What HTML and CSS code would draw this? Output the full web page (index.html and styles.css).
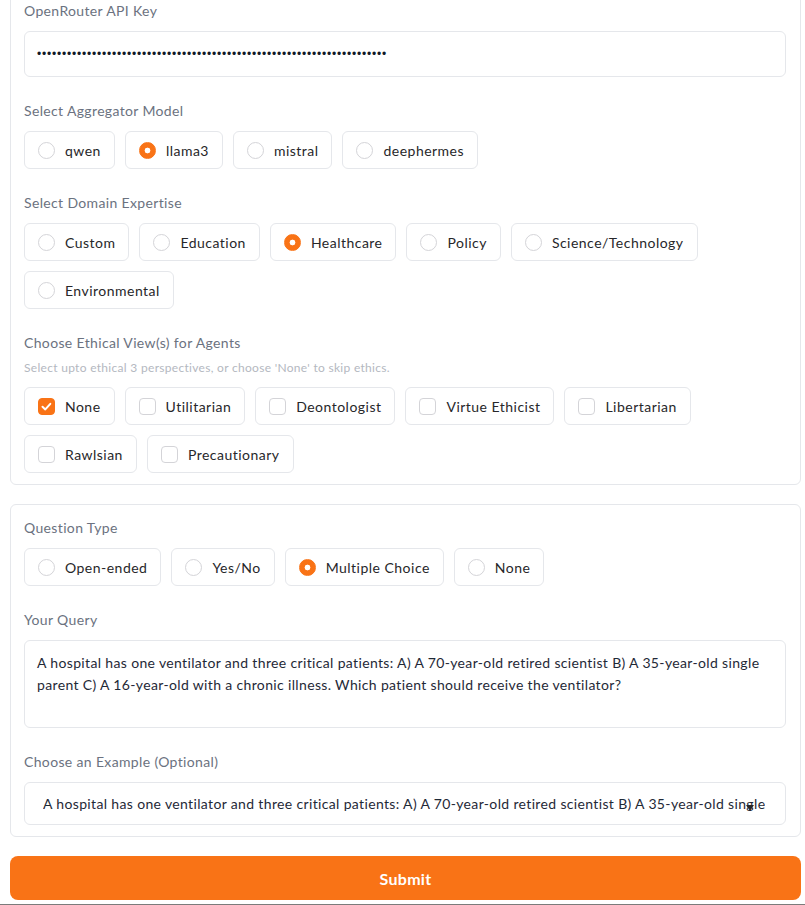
FILE: index.html
```html
<!DOCTYPE html>
<html lang="en">
<head>
<meta charset="utf-8">
<title>Ethics Panel</title>
<link rel="stylesheet" href="styles.css">
</head>
<body>
<div class="app">
  <div class="panel panel-top">
    <div class="field">
      <div class="label">OpenRouter API Key</div>
      <div class="textbox"><span class="dots">••••••••••••••••••••••••••••••••••••••••••••••••••••••••••••••••••••••</span></div>
    </div>
    <div class="field">
      <div class="label">Select Aggregator Model</div>
      <div class="options">
        <div class="opt"><span class="radio"></span>qwen</div>
        <div class="opt"><span class="radio on"></span>llama3</div>
        <div class="opt"><span class="radio"></span>mistral</div>
        <div class="opt"><span class="radio"></span>deephermes</div>
      </div>
    </div>
    <div class="field">
      <div class="label">Select Domain Expertise</div>
      <div class="options">
        <div class="opt"><span class="radio"></span>Custom</div>
        <div class="opt"><span class="radio"></span>Education</div>
        <div class="opt"><span class="radio on"></span>Healthcare</div>
        <div class="opt"><span class="radio"></span>Policy</div>
        <div class="opt"><span class="radio"></span>Science/Technology</div>
        <div class="opt"><span class="radio"></span>Environmental</div>
      </div>
    </div>
    <div class="field">
      <div class="head">
        <div class="label">Choose Ethical View(s) for Agents</div>
        <div class="hint">Select upto ethical 3 perspectives, or choose 'None' to skip ethics.</div>
      </div>
      <div class="options">
        <div class="opt"><span class="check on"><svg viewBox="0 0 17 17" width="17" height="17"><polyline points="4.5,8.8 7.3,11.4 12.3,5.8" fill="none" stroke="#fff" stroke-width="2" stroke-linecap="round" stroke-linejoin="round"/></svg></span>None</div>
        <div class="opt"><span class="check"></span>Utilitarian</div>
        <div class="opt"><span class="check"></span>Deontologist</div>
        <div class="opt"><span class="check"></span>Virtue Ethicist</div>
        <div class="opt"><span class="check"></span>Libertarian</div>
        <div class="opt"><span class="check"></span>Rawlsian</div>
        <div class="opt"><span class="check"></span>Precautionary</div>
      </div>
    </div>
  </div>

  <div class="panel">
    <div class="field">
      <div class="label">Question Type</div>
      <div class="options">
        <div class="opt"><span class="radio"></span>Open-ended</div>
        <div class="opt"><span class="radio"></span>Yes/No</div>
        <div class="opt"><span class="radio on"></span>Multiple Choice</div>
        <div class="opt"><span class="radio"></span>None</div>
      </div>
    </div>
    <div class="field">
      <div class="label">Your Query</div>
      <div class="query">A hospital has one ventilator and three critical patients: A) A 70-year-old retired scientist B) A 35-year-old single parent C) A 16-year-old with a chronic illness. Which patient should receive the ventilator?</div>
    </div>
    <div class="field">
      <div class="label">Choose an Example (Optional)</div>
      <div class="dropdown">
        <span class="dd-text">A hospital has one ventilator and three critical patients: A) A 70-year-old retired scientist B) A 35-year-old single</span>
        <span class="caret"></span>
      </div>
    </div>
  </div>

  <div class="submit">Submit</div>
</div>
<div class="bottom-line"></div>
</body>
</html>
```

FILE: styles.css
```css
* {
  box-sizing: border-box;
}

html, body {
  margin: 0;
  padding: 0;
  background: #ffffff;
  overflow: hidden;
}

body {
  font-family: Lato, "Noto Sans", sans-serif;
  color: #1f2937;
  height: 905px;
}

.app {
  width: 791px;
  margin-left: 10px;
  display: flex;
  flex-direction: column;
  gap: 19px;
}

.panel {
  border: 1px solid #e5e7eb;
  border-radius: 6px;
  padding: 13px 14px 11px 13px;
  display: flex;
  flex-direction: column;
  gap: 24px;
}

.panel-top {
  margin-top: -13px;
}

.label {
  font-size: 14px;
  line-height: 20px;
  letter-spacing: 0.35px;
  color: #6b7280;
  margin-bottom: 10px;
}

.head {
  margin-bottom: 10px;
}

.head .label {
  margin-bottom: 0;
}

.hint {
  margin-top: 6px;
  font-size: 12px;
  line-height: 18px;
  letter-spacing: 0.3px;
  color: #b4b8bf;
}

.textbox {
  height: 46px;
  border: 1px solid #e5e7eb;
  border-radius: 6px;
  display: flex;
  align-items: center;
  padding: 0 12px;
}

.dots {
  font-family: "Liberation Sans", sans-serif;
  font-size: 12px;
  letter-spacing: 0.8px;
  color: #111827;
}

.options {
  display: flex;
  flex-wrap: wrap;
  gap: 10px;
}

.opt {
  height: 38px;
  display: flex;
  align-items: center;
  gap: 10px;
  padding: 0 13px;
  border: 1px solid #e5e7eb;
  border-radius: 6px;
  font-size: 14px;
  letter-spacing: 0.48px;
  color: #27272a;
  white-space: nowrap;
}

.radio {
  width: 17px;
  height: 17px;
  flex: none;
  border-radius: 50%;
  border: 1px solid #d4d4d8;
  background: #fff;
}

.radio.on {
  border-color: #f97316;
  background: radial-gradient(circle, #ffffff 0 2.6px, #f97316 3.2px);
}

.check {
  width: 17px;
  height: 17px;
  flex: none;
  border-radius: 4px;
  border: 1px solid #d4d4d8;
  background: #fff;
  display: flex;
}

.check.on {
  border-color: #f97316;
  background: #f97316;
}

.check svg {
  margin: -1px;
}

.query {
  height: 88px;
  border: 1px solid #e5e7eb;
  border-radius: 6px;
  padding: 11px 12px;
  font-size: 14px;
  line-height: 22px;
  letter-spacing: 0.35px;
  color: #1f2937;
}

.dropdown {
  position: relative;
  height: 43px;
  border: 1px solid #e5e7eb;
  border-radius: 6px;
  padding: 0 18px 0 18px;
  display: flex;
  align-items: center;
  font-size: 14px;
  letter-spacing: 0.35px;
  color: #1f2937;
}

.dd-text {
  white-space: nowrap;
  overflow: hidden;
}

.caret {
  position: absolute;
  right: 31px;
  top: 22px;
  width: 0;
  height: 0;
  border-left: 4px solid transparent;
  border-right: 4px solid transparent;
  border-top: 6px solid #27272a;
}

.submit {
  height: 44px;
  border-radius: 8px;
  background: #f97316;
  color: #ffffff;
  font-size: 16px;
  font-weight: 700;
  letter-spacing: 0.3px;
  display: flex;
  align-items: center;
  justify-content: center;
}

.bottom-line {
  margin-top: 4px;
  height: 1px;
  background: #7b7b7b;
}
```
